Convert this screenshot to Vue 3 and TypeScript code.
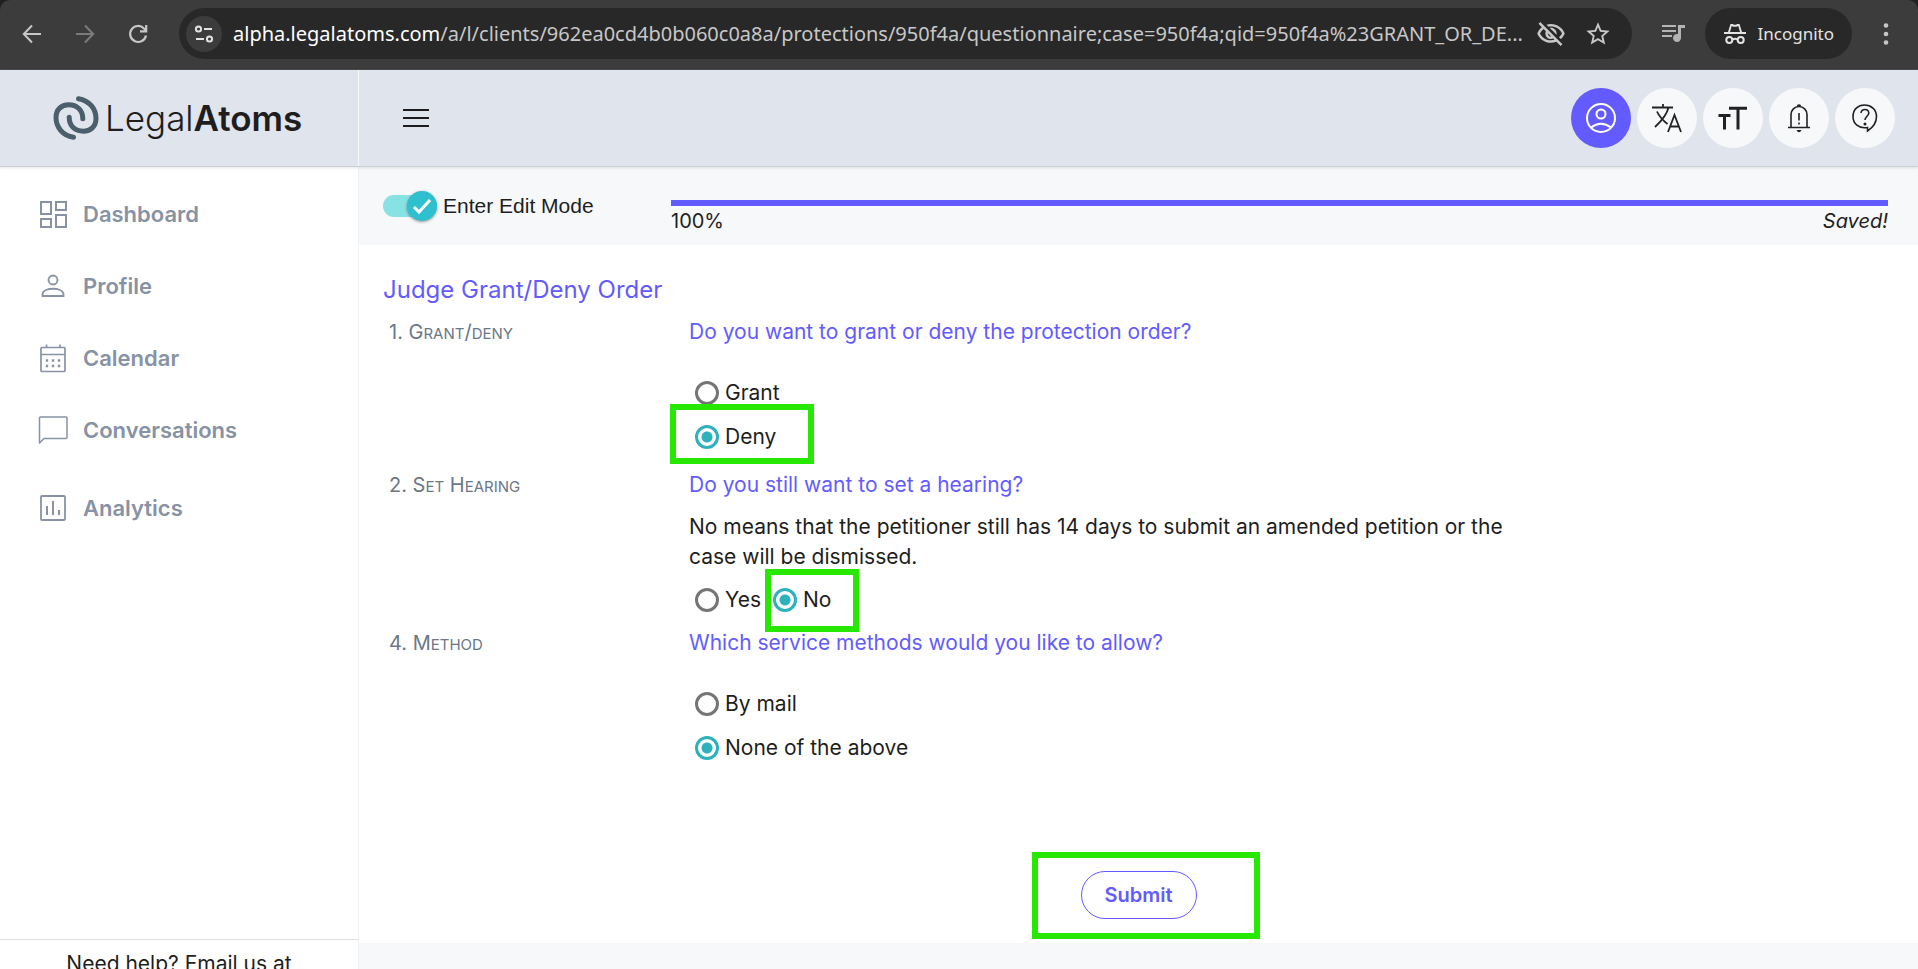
<script setup lang="ts">
import { ref } from 'vue'

interface Option { value: string; label: string; mark?: string }
interface Question {
  id: string
  number: number
  label: string
  prompt: string
  help?: string
  inline?: boolean
  options: Option[]
}

const navItems = [
  { icon: 'dashboard', label: 'Dashboard' },
  { icon: 'profile', label: 'Profile' },
  { icon: 'calendar', label: 'Calendar' },
  { icon: 'chat', label: 'Conversations' },
  { icon: 'analytics', label: 'Analytics' },
]

const questions: Question[] = [
  {
    id: 'grant', number: 1, label: 'Grant/deny',
    prompt: 'Do you want to grant or deny the protection order?',
    options: [{ value: 'grant', label: 'Grant' }, { value: 'deny', label: 'Deny', mark: 'mark-deny' }],
  },
  {
    id: 'hearing', number: 2, label: 'Set Hearing',
    prompt: 'Do you still want to set a hearing?',
    help: 'No means that the petitioner still has 14 days to submit an amended petition or the case will be dismissed.',
    inline: true,
    options: [{ value: 'yes', label: 'Yes' }, { value: 'no', label: 'No', mark: 'mark-no' }],
  },
  {
    id: 'method', number: 4, label: 'Method',
    prompt: 'Which service methods would you like to allow?',
    options: [{ value: 'mail', label: 'By mail' }, { value: 'none', label: 'None of the above' }],
  },
]

const answers = ref<Record<string, string>>({ grant: 'deny', hearing: 'no', method: 'none' })
const editMode = ref(true)
const progress = ref(100)

// Splits a label into runs, so that lower-case runs can be set as small capitals.
const capRuns = (text: string) =>
  (text.match(/[a-z]+|[^a-z]+/g) ?? []).map(run => ({ run, small: /[a-z]/.test(run) }))
</script>

<template>
  <div class="window">
    <div class="frame">
      <div class="browser">
        <button class="tool" aria-label="Back">
          <svg width="24" height="24" viewBox="0 0 24 24" fill="none" stroke="#c7c7c7" stroke-width="2"><path d="M21 12H4M12 3.5 3.8 12l8.200 8.500" /></svg>
        </button>
        <button class="tool" aria-label="Forward">
          <svg width="24" height="24" viewBox="0 0 24 24" fill="none" stroke="#7b7b7b" stroke-width="2"><path d="M3 12h17M12 3.500l8.200 8.500-8.200 8.500" /></svg>
        </button>
        <button class="tool" aria-label="Reload">
          <svg width="24" height="24" viewBox="0 0 24 24" fill="none" stroke="#c7c7c7" stroke-width="2.200"><path d="M20 13.500A8 8 0 1 1 18 6.500l2 2M20.200 3v6.300h-6.200" /></svg>
        </button>
        <div class="omnibox">
          <button class="site" aria-label="Site information">
            <svg width="20" height="20" viewBox="0 0 20 20" fill="none" stroke="#e3e3e3" stroke-width="2"><circle cx="4.500" cy="5" r="2.600" /><path d="M10 5h8M2 15h8" /><circle cx="15.500" cy="15" r="2.600" /></svg>
          </button>
          <div class="url"><span>alpha.legalatoms.com</span>/a/l/clients/962ea0cd4b0b060c0a8a/protections/950f4a/questionnaire;case=950f4a;qid=950f4a%23GRANT_OR_DE...</div>
          <button class="tool eye" aria-label="Tracking protection">
            <svg width="30" height="30" viewBox="0 0 24 24" fill="#c7c7c7"><path d="M12 6c3.790 0 7.170 2.130 8.820 5.500-.59 1.220-1.420 2.270-2.410 3.120l1.410 1.410c1.390-1.230 2.490-2.770 3.180-4.530C21.270 7.110 17 4 12 4c-1.270 0-2.490.2-3.640.57l1.650 1.650C10.660 6.090 11.320 6 12 6zm-1.070 1.140L13 9.210c.57.25 1.030.71 1.280 1.280l2.070 2.070c.08-.34.14-.7.14-1.070C16.500 9.010 14.480 7 12 7c-.37 0-.72.05-1.070.14zM2.010 3.870l2.680 2.680C3.060 7.830 1.770 9.530 1 11.500 2.730 15.890 7 19 12 19c1.520 0 2.980-.29 4.320-.82l3.420 3.420 1.410-1.410L3.420 2.450 2.010 3.870zm7.500 7.500l2.610 2.610c-.04.01-.08.02-.12.02-1.380 0-2.500-1.120-2.500-2.500 0-.05.01-.08.01-.13zm-3.400-3.400l1.750 1.750c-.23.55-.36 1.150-.36 1.780 0 2.480 2.020 4.500 4.500 4.500.63 0 1.230-.13 1.770-.36l.98.98c-.88.24-1.800.38-2.750.38-3.790 0-7.170-2.130-8.820-5.500.7-1.430 1.720-2.610 2.930-3.530z" /></svg>
          </button>
          <button class="tool" aria-label="Bookmark">
            <svg width="28" height="28" viewBox="0 0 24 24" fill="#c7c7c7"><path d="M22 9.240l-7.190-.62L12 2 9.190 8.630 2 9.240l5.460 4.730L5.820 21 12 17.270 18.180 21l-1.630-7.030L22 9.240zM12 15.400l-3.760 2.270 1-4.280-3.320-2.880 4.380-.38L12 6.100l1.710 4.040 4.380.38-3.320 2.880 1 4.280L12 15.400z" /></svg>
          </button>
        </div>
        <button class="tool media" aria-label="Media controls">
          <svg width="28" height="28" viewBox="0 0 28 28" fill="#b4b4b4"><path d="M2 5h14v2H2zM2 10h14v2H2zM2 15h10v2H2zM18 5h7v3h-4v10a4 4 0 1 1-3-3.900z" /></svg>
        </button>
        <button class="incognito">
          <svg width="24" height="24" viewBox="0 0 24 24" fill="#e3e3e3"><path fill-rule="evenodd" d="M7.500 2h2.300l1.200.8h2L14.200 2h2.300L19 10h4v2H1v-2h4zM8.700 4 7 10h10L15.300 4l-1.600.8h-3.400z" /><path fill="none" stroke="#e3e3e3" stroke-width="2" d="M9.600 17.500q2.400-1.400 4.800 0" /><circle cx="6.300" cy="18" r="3" fill="none" stroke="#e3e3e3" stroke-width="2" /><circle cx="17.700" cy="18" r="3" fill="none" stroke="#e3e3e3" stroke-width="2" /></svg>
          Incognito
        </button>
        <button class="tool" aria-label="Menu">
          <svg width="24" height="24" viewBox="0 0 24 24" fill="#c7c7c7"><circle cx="12" cy="3.500" r="2.300" /><circle cx="12" cy="12" r="2.300" /><circle cx="12" cy="20.500" r="2.300" /></svg>
        </button>
      </div>
    </div>

    <header class="header">
      <a class="brand" href="#">
        <svg width="46" height="44" viewBox="0 0 45 44" fill="none" stroke="#4a5f6b" stroke-width="5" stroke-linecap="round"><path d="M25 2.700C36 4.500 42.500 13 42.500 22.500 42.500 30.500 37 35.200 30 35.200 21.500 35.200 15.700 30 15.700 21.300" /><path d="M20 41.300C9 39.500 2.500 31 2.500 21.500 2.500 13.500 8 8.800 15 8.800 23.500 8.800 29.300 14 29.300 22.700" /></svg>
        <span class="wordmark">Legal<b>Atoms</b></span>
      </a>
      <div class="bar">
        <button class="menu" aria-label="Toggle sidebar">
          <svg width="28" height="20" viewBox="0 0 28 20" stroke="#1d1d1d" stroke-width="2"><path d="M1 2h26M1 10h26M1 18h26" /></svg>
        </button>
        <div class="actions">
          <button class="round active" aria-label="Account">
            <svg width="32" height="32" viewBox="0 0 32 32" fill="none" stroke="#fff" stroke-width="2"><circle cx="16" cy="16" r="14" /><circle cx="16" cy="12" r="4.500" /><path d="M6 25.500q10-7.500 20 0" /></svg>
          </button>
          <button class="round" aria-label="Language">
            <svg width="32" height="32" viewBox="0 0 32 32" fill="none" stroke="#222" stroke-width="1.800"><path d="M1 5.500h21M12 2v3.500M17.500 5.500C16 12 10.500 19 4 25M6 9.500C8 14 12 18.500 16.500 22M17 30l6.500-17 6.500 17M19.300 24.500h8.400" /></svg>
          </button>
          <button class="round" aria-label="Text size">
            <svg width="32" height="32" viewBox="0 0 32 32" fill="none" stroke="#222" stroke-width="3"><path d="M12 6.200h18M21 6v21.500M1.500 13.500h12M7.500 13.500v14" /></svg>
          </button>
          <button class="round" aria-label="Notifications">
            <svg width="32" height="32" viewBox="0 0 32 32" fill="none" stroke="#222" stroke-width="1.600"><path d="M5 25.500h22M8 25V12.500a8 8 0 0 1 16 0V25M16 11v7.500M16 20.500v2" /><path d="M13.800 4.500a2.200 2.200 0 0 1 4.400 0M13.500 28h5q-1 2.300-2.500 2.300t-2.500-2.300" fill="#222" stroke="none" /></svg>
          </button>
          <button class="round" aria-label="Help">
            <svg width="32" height="32" viewBox="0 0 32 32" fill="none" stroke="#222" stroke-width="1.600"><path d="M18.500 29v-3.500c-9 1.500-14.500-4-14.500-11C4 7.500 9 3 15.500 3S27.500 7.500 27.500 14.500c0 6.500-3.500 11-9 14.500z" /><path d="M12 11q.5-3.500 4-3.500t3.800 3.500c0 3-3.800 3.500-3.800 7" /><circle cx="16" cy="22" r=".7" fill="#222" /></svg>
          </button>
        </div>
      </div>
    </header>

    <div class="body">
      <aside class="sidebar">
        <nav class="nav">
          <a v-for="item in navItems" :key="item.label" href="#" :class="['nav-item', item.icon]">
            <svg width="30" height="30" viewBox="0 0 30 30" fill="none" stroke="#8792a4" stroke-width="2">
              <path v-if="item.icon === 'dashboard'" d="M3 3h10v12H3zM18 3h10v8H18zM18 16h10v12H18zM3 20h10v8H3z" />
              <g v-else-if="item.icon === 'profile'" stroke-width="1.800"><circle cx="15" cy="9" r="4.500" /><path d="M4.500 25v-2c1-7 20-7 21 0v2z" /></g>
              <template v-else-if="item.icon === 'calendar'"><rect x="3" y="4.500" width="24" height="24" rx="1" stroke-width="1.700" /><path stroke-width="1.700" d="M3 11.500h24M8.500 1.500v3M22 1.500v3" /><path stroke-width="2.400" stroke-dasharray="2.400 3.600" d="M7.800 17.500h15M7.800 23h15" /></template>
              <path v-else-if="item.icon === 'chat'" stroke-width="1.500" stroke-linejoin="round" d="M1.500 28V3q0-1 1-1h25.500q1 0 1 1v19.500q0 1-1 1H6z" />
              <template v-else><rect x="3" y="3" width="24" height="24" rx="1" stroke-width="1.800" /><path d="M9 13v9M15 8v14M21 17v5" /></template>
            </svg>
            {{ item.label }}
          </a>
        </nav>
        <footer class="help">Need help? Email us at</footer>
      </aside>

      <main class="main">
        <section class="status">
          <label class="toggle">
            <input v-model="editMode" type="checkbox" role="switch" />
            <span class="track"><span class="thumb"><svg width="20" height="20" viewBox="0 0 20 20" fill="none" stroke="#fff" stroke-width="3"><path d="M2 11l5 5L18 4" /></svg></span></span>
            Enter Edit Mode
          </label>
          <div class="progress">
            <div class="rail"><div class="fill" :style="{ width: progress + '%' }"></div></div>
            <div class="legend"><span>{{ progress }}%</span><em>Saved!</em></div>
          </div>
        </section>

        <form class="panel" @submit.prevent>
          <h1>Judge Grant/Deny Order</h1>
          <div v-for="q in questions" :key="q.id" class="question" role="radiogroup" :aria-labelledby="'prompt-' + q.id">
            <div class="label">{{ q.number }}. <span v-for="(part, i) in capRuns(q.label)" :key="i" :class="{ small: part.small }">{{ part.run }}</span></div>
            <div class="content">
              <p :id="'prompt-' + q.id" class="prompt">{{ q.prompt }}</p>
              <p v-if="q.help" class="hint">{{ q.help }}</p>
              <div :class="['options', { inline: q.inline }]">
                <label v-for="o in q.options" :key="o.value" :class="['option', o.mark]">
                  <input v-model="answers[q.id]" type="radio" :name="q.id" :value="o.value" />
                  {{ o.label }}
                </label>
              </div>
            </div>
          </div>
          <div class="submit-row"><div class="mark-submit"><button class="submit" type="submit">Submit</button></div></div>
        </form>
      </main>
    </div>
  </div>
</template>

<style>
body { margin: 0; }
</style>

<style scoped>
*, *::after { box-sizing: border-box; }
.window {
  height: 100vh;
  display: flex;
  flex-direction: column;
  overflow: hidden;
  background: #f6f8fa;
  color: #1e1e1e;
  font-family: Inter, "Liberation Sans", sans-serif;
  font-size: 21px;
  line-height: 30px;
}
button { padding: 0; border: 0; background: none; font: inherit; color: inherit; cursor: pointer; }
a { color: inherit; text-decoration: none; }
svg { display: block; flex: none; }

.frame { flex: none; background: #202020; }
.browser {
  height: 70px;
  display: flex;
  align-items: center;
  padding: 0 20px 2px;
  gap: 29px;
  background: #3c3c3c;
  border-bottom: 1px solid #4a4a4a;
  border-radius: 10px 10px 0 0;
}
.tool { flex: none; }
.omnibox {
  flex: 1;
  min-width: 0;
  height: 51px;
  display: flex;
  align-items: center;
  padding: 0 20px 0 7px;
  gap: 18px;
  border-radius: 26px;
  background: #282828;
}
.site {
  flex: none;
  width: 36px;
  height: 36px;
  display: grid;
  place-items: center;
  border-radius: 50%;
  background: #3c3c3c;
}
.url {
  flex: 1;
  min-width: 0;
  overflow: hidden;
  white-space: nowrap;
  margin: 0 -14px 0 -7px;
  color: #c7c7c7;
  font-family: "Noto Sans", sans-serif;
  font-size: 20px;
}
.url span { color: #fff; }
.incognito {
  height: 51px;
  display: flex;
  align-items: center;
  gap: 11px;
  margin-left: -12px;
  margin-right: -7px;
  padding: 0 18px;
  border-radius: 26px;
  background: #282828;
  color: #e3e3e3;
  font-family: "Noto Sans", sans-serif;
  font-size: 17px;
}
.media { margin-left: -1px; }

.header {
  flex: none;
  height: 97px;
  display: flex;
  position: relative;
  background: #e0e4ec;
  border-bottom: 1px solid #cbd0d8;
  box-shadow: 0 1px 3px rgba(0, 0, 0, .1);
}
.brand {
  width: 359px;
  display: flex;
  align-items: center;
  gap: 6px;
  padding-left: 53px;
  border-right: 1px solid #f6f8fa;
}
.wordmark { font-size: 35px; font-weight: 300; line-height: 44px; }
.wordmark b { font-weight: 600; }
.bar {
  flex: 1;
  display: flex;
  align-items: center;
  justify-content: space-between;
  padding: 0 23px 0 43px;
}
.actions { display: flex; gap: 6px; }
.round {
  width: 60px;
  height: 60px;
  display: grid;
  place-items: center;
  border-radius: 50%;
  background: #f6f8fa;
}
.round.active { background: #635bff; }

.body { flex: 1; min-height: 0; display: flex; }
.sidebar {
  width: 359px;
  flex: none;
  display: flex;
  flex-direction: column;
  background: #fff;
  border-right: 1px solid #f0f2f5;
}
.nav { display: flex; flex-direction: column; gap: 42px; padding: 32px 38px; }
.nav-item {
  display: flex;
  align-items: center;
  gap: 15px;
  color: #8792a4;
  font-size: 22px;
  font-weight: 600;
}
.nav-item.analytics { margin-top: 6px; }
.help {
  height: 30px;
  margin-top: auto;
  padding-top: 9px;
  overflow: hidden;
  border-top: 1px solid #dfe1e3;
  text-align: center;
  line-height: 30px;
}

.main { flex: 1; min-width: 0; }
.status { height: 78px; display: flex; padding: 0 30px 0 24px; }
.toggle {
  width: 288px;
  height: 78px;
  display: flex;
  align-items: center;
  gap: 6px;
  font-family: "Liberation Sans", Arial, sans-serif;
}
.toggle input { position: absolute; opacity: 0; }
.track {
  width: 54px;
  height: 22px;
  display: flex;
  align-items: center;
  justify-content: flex-start;
  border-radius: 11px;
  background: #c4c8cd;
}
.thumb {
  width: 30px;
  height: 30px;
  display: grid;
  place-items: center;
  border-radius: 50%;
  background: #fff;
  box-shadow: 0 1px 3px rgba(0, 0, 0, .4);
}
.toggle input:checked + .track { justify-content: flex-end; background: #87e2e4; }
.toggle input:checked + .track .thumb { background: #2fc0d0; }
.progress { flex: 1; padding-top: 33px; }
.rail { height: 6px; background: #dcdfe6; }
.fill { height: 6px; background: #635bff; }
.legend { display: flex; justify-content: space-between; font-size: 20px; }

.panel { background: #fff; padding: 30px 24px 4px; }
h1 { margin: 0 0 12px; color: #635bff; font-size: 24px; font-weight: 400; line-height: 30px; }
.question { display: grid; grid-template-columns: 300px minmax(0, 840px); padding-left: 6px; margin-bottom: 6px; }
.label { color: #6b7787; font-size: 20px; }
.label .small { font-size: 15px; text-transform: uppercase; }
p { margin: 0; }
.prompt { color: #635bff; }
.hint { margin: 12px 0 6px; }
.options { margin-top: 24px; padding: 0 0 5px 6px; }
.options.inline { display: flex; gap: 12px; margin-top: 6px; padding-bottom: 0; }
.option { position: relative; display: flex; align-items: center; gap: 6px; width: max-content; height: 44px; }
.option input {
  appearance: none;
  width: 24px;
  height: 24px;
  margin: 0;
  border: 3px solid #757575;
  border-radius: 50%;
}
.option input:checked {
  border-color: #2db1bd;
  background: radial-gradient(circle, #2db1bd 5px, transparent 6px);
}
.mark-deny::after, .mark-no::after {
  content: "";
  position: absolute;
  border: 6px solid #27e800;
  pointer-events: none;
}
.mark-deny::after { left: -25px; top: -11px; width: 144px; height: 60px; }
.mark-no::after { left: -8px; top: -9px; width: 94px; height: 63px; }
.submit-row { display: flex; justify-content: center; padding-top: 71px; }
.mark-submit { display: flex; padding: 13px 57px 14px 43px; border: 6px solid #27e800; margin-left: 14px; }
.submit {
  width: 116px;
  height: 48px;
  border: 1px solid #635bff;
  border-radius: 24px;
  color: #635bff;
  font-size: 20px;
  font-weight: 600;
}
</style>
